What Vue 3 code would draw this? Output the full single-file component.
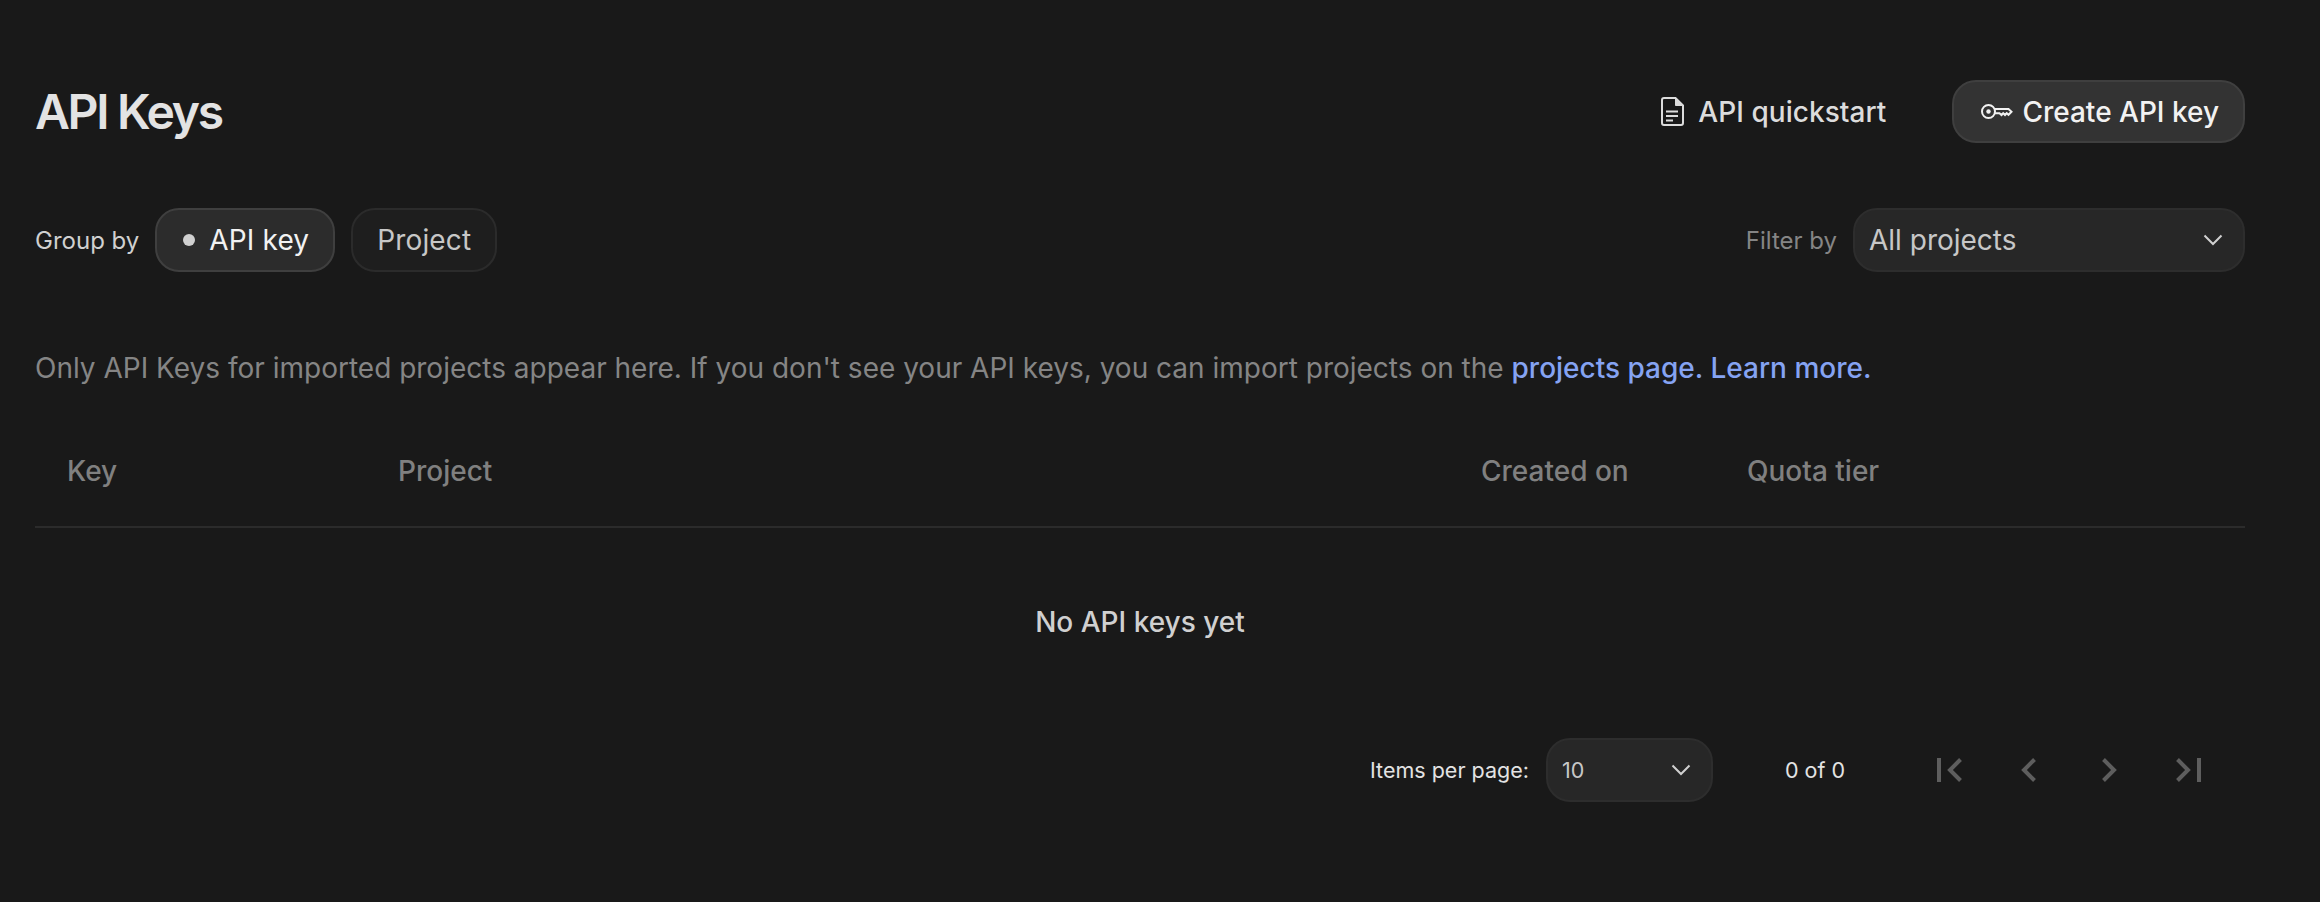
<script setup>
const columns = ['Key', 'Project', 'Created on', 'Quota tier']
</script>

<template>
  <div class="page">
    <header class="top-row">
      <h1 class="title">API Keys</h1>
      <div class="top-actions">
        <a class="quickstart">
          <svg class="doc-icon" viewBox="0 0 23 29" fill="none" stroke="currentColor" stroke-width="2">
            <path d="M3 1h11.500L22 8.500V26a2 2 0 0 1-2 2H3a2 2 0 0 1-2-2V3a2 2 0 0 1 2-2z" />
            <path d="M14.500 1l7.500 7.500h-7.500z" fill="currentColor" stroke-width="1" />
            <path d="M5 14.500h12M5 19h12M5 23.500h7" />
          </svg>
          API quickstart
        </a>
        <button class="create-btn">
          <svg class="key-icon" viewBox="0 0 32 15" fill="none" stroke="currentColor" stroke-width="2">
            <circle cx="7.500" cy="7.500" r="6.500" />
            <circle cx="7.500" cy="7.500" r="2.200" fill="currentColor" stroke="none" />
            <path d="M14 5h13.500l3 2.800-3 3-1.800-1.600-1.700 1.800-1.800-1.800-1.700 1.800-2-1.800H14" />
          </svg>
          Create API key
        </button>
      </div>
    </header>

    <section class="filter-row">
      <div class="group-by">
        <span class="group-label">Group by</span>
        <button class="chip active"><span class="dot"></span>API key</button>
        <button class="chip">Project</button>
      </div>
      <div class="filter-by">
        <span class="filter-label">Filter by</span>
        <div class="select project-select">
          <span>All projects</span>
          <svg class="chev" viewBox="0 0 20 12" fill="none" stroke="currentColor" stroke-width="2"><path d="M1.500 1.500 10 10l8.500-8.500" /></svg>
        </div>
      </div>
    </section>

    <p class="info">
      Only API Keys for imported projects appear here. If you don't see your API keys, you can import projects on the
      <a class="link">projects page. Learn more.</a>
    </p>

    <div class="table-head">
      <div v-for="col in columns" :key="col" class="th">{{ col }}</div>
    </div>
    <div class="empty">No API keys yet</div>

    <footer class="pager">
      <span class="per-page">Items per page:</span>
      <div class="select size-select">
        <span>10</span>
        <svg class="chev" viewBox="0 0 20 12" fill="none" stroke="currentColor" stroke-width="2"><path d="M1.500 1.500 10 10l8.500-8.500" /></svg>
      </div>
      <span class="range">0 of 0</span>
      <div class="pager-btns">
        <svg viewBox="0 0 28 28" fill="none" stroke="currentColor" stroke-width="4"><path d="M4 2v24" /><path d="M25.500 3.500 15 14l10.500 10.500" /></svg>
        <svg viewBox="0 0 28 28" fill="none" stroke="currentColor" stroke-width="4"><path d="M19.500 3.500 9 14l10.500 10.500" /></svg>
        <svg viewBox="0 0 28 28" fill="none" stroke="currentColor" stroke-width="4"><path d="M8.500 3.500 19 14 8.500 24.500" /></svg>
        <svg viewBox="0 0 28 28" fill="none" stroke="currentColor" stroke-width="4"><path d="M2.500 3.500 13 14 2.500 24.500" /><path d="M24 2v24" /></svg>
      </div>
    </footer>
  </div>
</template>

<style scoped>
.page {
  box-sizing: border-box;
  height: 902px;
  padding: 80px 75px 0 35px;
  background: #191919;
  color: #e3e3e3;
  font-family: Inter, "Noto Sans", sans-serif;
  overflow: hidden;
}
button {
  font-family: inherit;
  cursor: pointer;
}
.top-row,
.filter-row,
.group-by,
.filter-by,
.top-actions {
  display: flex;
  align-items: center;
}
.top-row,
.filter-row {
  justify-content: space-between;
}
.title {
  margin: 0;
  font-size: 48px;
  font-weight: 600;
  letter-spacing: -2.300px;
  color: #e3e3e3;
}
.quickstart {
  display: flex;
  align-items: center;
  gap: 14px;
  font-size: 28px;
  font-weight: 500;
  letter-spacing: 0.050px;
  color: #dcdcdc;
  margin-right: 66px;
}
.doc-icon {
  width: 23px;
  height: 29px;
}
.create-btn {
  display: flex;
  align-items: center;
  gap: 9px;
  height: 63px;
  padding: 0 24px 0 27px;
  border: 2px solid #3f3f3f;
  border-radius: 24px;
  background: #333333;
  color: #f2f2f2;
  font-size: 28px;
  font-weight: 500;
}
.key-icon {
  width: 32px;
  height: 15px;
}
.filter-row {
  margin-top: 65px;
}
.group-label {
  font-size: 24px;
  color: #d0d0d0;
  margin-right: 16px;
}
.chip {
  display: flex;
  align-items: center;
  height: 64px;
  padding: 0 24px;
  margin-right: 16px;
  border: 2px solid #2b2b2b;
  border-radius: 24px;
  background: #1e1e1e;
  color: #c7c7c7;
  font-size: 28px;
  letter-spacing: 0.150px;
}
.chip.active {
  padding-left: 26px;
  background: #2c2c2c;
  border-color: #3f3f3f;
  color: #f2f2f2;
}
.dot {
  width: 12px;
  height: 12px;
  border-radius: 50%;
  background: #d0d0d0;
  margin-right: 14px;
}
.filter-label {
  font-size: 24px;
  color: #858585;
  margin-right: 16px;
}
.select {
  box-sizing: border-box;
  display: flex;
  align-items: center;
  justify-content: space-between;
  background: #272727;
  border: 2px solid #2d2d2d;
  border-radius: 24px;
  color: #c7c7c7;
}
.project-select {
  width: 392px;
  height: 64px;
  padding: 0 20px 0 14px;
  font-size: 28px;
}
.chev {
  width: 20px;
  height: 12px;
  color: #d0d0d0;
}
.info {
  margin: 75px 0 0;
  font-size: 28px;
  line-height: 42px;
  color: #858585;
}
.link {
  color: #85a3f2;
  font-weight: 500;
}
.table-head {
  display: grid;
  grid-template-columns: 331px 1083px 266px 1fr;
  height: 110px;
  margin-top: 27px;
  align-items: center;
  border-bottom: 2px solid #2b2b2b;
}
.th {
  padding-left: 32px;
  font-size: 28px;
  font-weight: 500;
  color: #808080;
}
.empty {
  height: 188px;
  padding-top: 77px;
  box-sizing: border-box;
  text-align: center;
  font-size: 28px;
  font-weight: 500;
  color: #d0d0d0;
}
.pager {
  display: flex;
  align-items: center;
  justify-content: flex-end;
  margin-top: 22px;
  font-size: 21.500px;
  color: #e3e3e3;
}
.per-page {
  margin-right: 17px;
}
.size-select {
  width: 167px;
  height: 64px;
  padding: 0 20px 0 14px;
}
.range {
  margin: 0 90px 0 72px;
}
.pager-btns {
  display: flex;
  gap: 52px;
  color: #5e5e5e;
  margin-right: 42px;
}
.pager-btns svg {
  width: 28px;
  height: 28px;
}
</style>

<style>
body {
  background: #191919;
}
</style>
